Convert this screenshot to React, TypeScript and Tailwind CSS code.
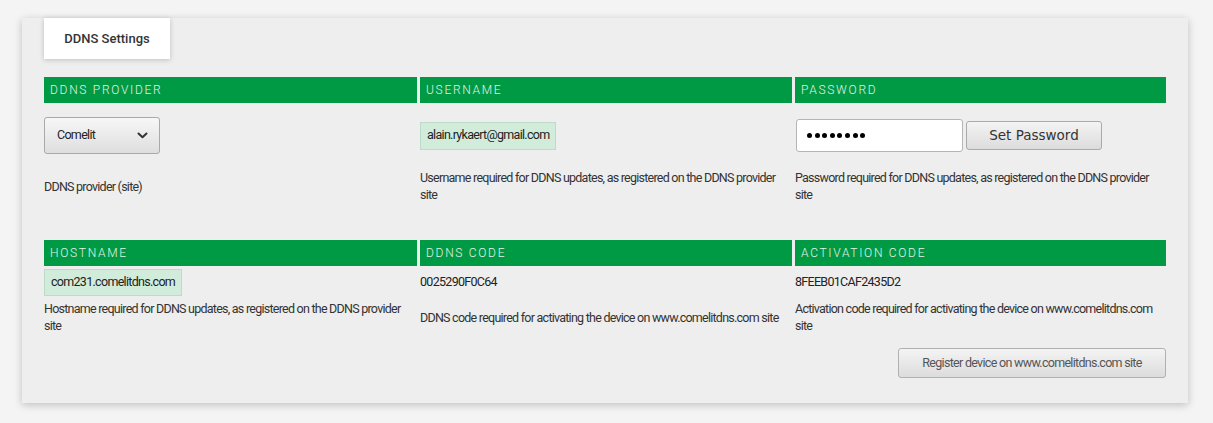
import React from "react";

const font = { fontFamily: 'Roboto, "Liberation Sans", sans-serif' };

function Header({ children }: { children: React.ReactNode }) {
  return (
    <div className="h-[26px] bg-[#009a44] flex items-center pl-[6px] text-[12px] tracking-[1.7px] text-[#e3f3e8] font-light">
      {children}
    </div>
  );
}

function Desc({ children }: { children: React.ReactNode }) {
  return <div className="text-[12.5px] leading-[17px] tracking-[-0.75px] text-[#333]">{children}</div>;
}

function Chevron() {
  return (
    <svg width="11" height="7" viewBox="0 0 11 7" className="text-[#333]">
      <path d="M1.5 1.5 L5.5 5.2 L9.5 1.5" fill="none" stroke="currentColor" strokeWidth="2" strokeLinecap="round" strokeLinejoin="round" />
    </svg>
  );
}

const val = "text-[12.5px] tracking-[-0.7px] text-[#222]";

export default function App() {
  return (
    <div className="w-[1213px] h-[423px] bg-[#f4f4f4] pt-[21px] pl-[22px]" style={font}>
      <div className="w-[1166px] h-[385px] bg-[#eeeeee] shadow-[0_2px_8px_rgba(0,0,0,0.22)] px-[22px]">
        <div className="-mt-[3px] w-[126px] h-[41px] bg-white shadow-[0_1px_5px_rgba(0,0,0,0.2)] flex items-center justify-center text-[13px] font-medium text-[#333] tracking-[0px]">
          DDNS Settings
        </div>
        <div className="mt-[18px] grid grid-cols-[373px_372px_371px] gap-x-[3px]">
          <Header>DDNS PROVIDER</Header>
          <Header>USERNAME</Header>
          <Header>PASSWORD</Header>

          <div className="h-[65px] flex items-center">
            <div className={`w-[116px] h-[37px] rounded-[3px] border border-[#a9a9a9] bg-gradient-to-b from-[#f7f7f7] to-[#dedede] flex items-center justify-between pl-[12px] pr-[11px] ${val}`}>
              <span>Comelit</span>
              <Chevron />
            </div>
          </div>
          <div className="h-[65px] flex items-center">
            <div className={`h-[28px] px-[6px] bg-[#d2ecdc] border border-[#bcdcc7] flex items-center ${val}`}>
              alain.rykaert@gmail.com
            </div>
          </div>
          <div className="h-[65px] flex items-center gap-[3px] pl-[1px]">
            <div className="w-[167px] h-[33px] bg-white border border-[#b5b5b5] rounded-[3px] flex items-center gap-[2.6px] pl-[10px]">
              {Array.from({ length: 8 }).map((_, i) => (
                <div key={i} className="w-[5px] h-[5px] rounded-full bg-black" />
              ))}
            </div>
            <div
              className="w-[136px] h-[29px] rounded-[3px] border border-[#aaaaaa] bg-gradient-to-b from-[#f4f4f4] to-[#dcdcdc] flex items-center justify-center text-[13.5px] text-[#333]"
              style={{ fontFamily: '"DejaVu Sans", sans-serif' }}
            >
              Set Password
            </div>
          </div>

          <div className="h-[36px] flex items-center"><Desc>DDNS provider (site)</Desc></div>
          <div className="h-[36px] flex items-center"><Desc>Username required for DDNS updates, as registered on the DDNS provider site</Desc></div>
          <div className="h-[36px] flex items-center"><Desc>Password required for DDNS updates, as registered on the DDNS provider site</Desc></div>

          <div className="col-span-3 h-[36px]" />

          <Header>HOSTNAME</Header>
          <Header>DDNS CODE</Header>
          <Header>ACTIVATION CODE</Header>

          <div className="h-[33px] flex items-center">
            <div className={`h-[27px] px-[6px] bg-[#d2ecdc] border border-[#bcdcc7] flex items-center ${val}`}>
              com231.comelitdns.com
            </div>
          </div>
          <div className={`h-[33px] flex items-center ${val}`}>0025290F0C64</div>
          <div className={`h-[33px] flex items-center ${val}`}>8FEEB01CAF2435D2</div>

          <div className="h-[36px] flex items-center"><Desc>Hostname required for DDNS updates, as registered on the DDNS provider site</Desc></div>
          <div className="h-[36px] flex items-center"><Desc>DDNS code required for activating the device on www.comelitdns.com site</Desc></div>
          <div className="h-[36px] flex items-center"><Desc>Activation code required for activating the device on www.comelitdns.com site</Desc></div>

          <div className="col-start-3 mt-[13px] flex justify-end">
            <div className="w-[268px] h-[30px] rounded-[3px] border border-[#b0b0b0] bg-gradient-to-b from-[#f4f4f4] to-[#dcdcdc] flex items-center justify-center text-[12.5px] tracking-[-0.7px] text-[#555]">
              Register device on www.comelitdns.com site
            </div>
          </div>
        </div>
      </div>
    </div>
  );
}
